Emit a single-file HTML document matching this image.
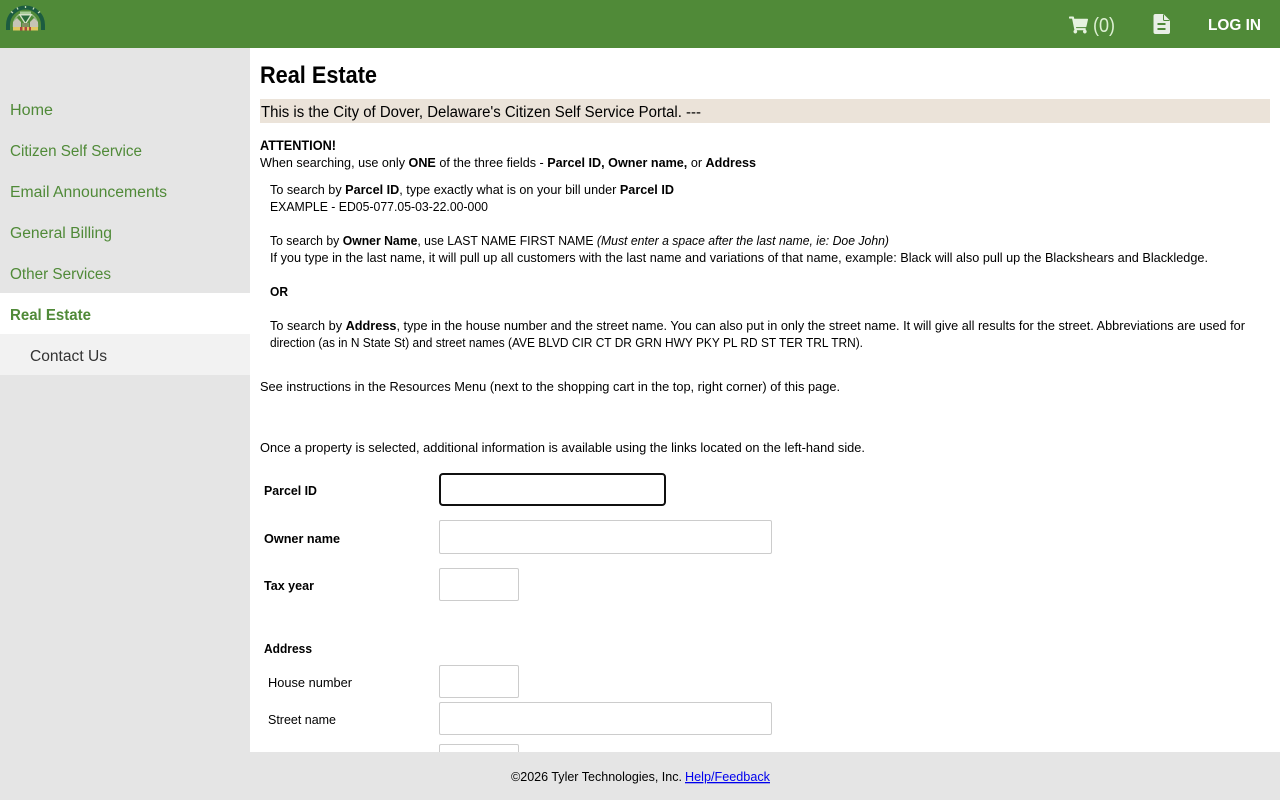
<!DOCTYPE html>
<html lang="en">
<head>
<meta charset="utf-8">
<title>Real Estate</title>
<style>
html,body{margin:0;padding:0;width:1280px;height:800px;overflow:hidden;background:#fff}
body{position:relative;font-family:"Liberation Sans",sans-serif}
.box{position:absolute}
input{position:absolute;box-sizing:border-box;left:439px;margin:0;padding:0;background:#fff;border:1px solid #ccc;border-radius:2px;outline:none}
svg{position:absolute;left:0;top:0}
text{font-family:"Liberation Sans",sans-serif;font-size:13px;fill:#000}
.b{font-weight:700}
.nav text,.nav{font-size:15.5px;fill:#508a38}
</style>
</head>
<body>
<div class="box" style="left:0;top:48px;width:250px;height:704px;background:#e5e5e5"></div>
<div class="box" style="left:0;top:293px;width:250px;height:41px;background:#fff"></div>
<div class="box" style="left:0;top:334px;width:250px;height:41px;background:#f2f2f2"></div>
<div class="box" style="left:260px;top:99px;width:1010px;height:24px;background:#ebe3d9"></div>

<input type="text" style="top:473px;width:227px;height:33px;border:2px solid #101010;border-radius:4px">
<input type="text" style="top:520px;width:333px;height:34px">
<input type="text" style="top:568px;width:80px;height:33px">
<input type="text" style="top:665px;width:80px;height:33px">
<input type="text" style="top:702px;width:333px;height:33px">
<input type="text" style="top:744px;width:80px;height:33px">

<div class="box" style="left:0;top:752px;width:1280px;height:48px;background:#e5e5e5"></div>
<div class="box" style="left:0;top:0;width:1280px;height:48px;background:#508a38"></div>

<svg width="1280" height="800" viewBox="0 0 1280 800" xmlns="http://www.w3.org/2000/svg">
  <!-- logo -->
  <g>
    <path d="M8 30V25A17.500 17.500 0 0 1 43 25V30" fill="none" stroke="#1c5c40" stroke-width="4"/>
    <path d="M13.500 27V25A12 12 0 0 1 37.500 25V27" fill="none" stroke="#8fb67f" stroke-width="1.500"/>
    <path d="M11 11.500L13 13M17 7.500L18 9.500M25.500 6V8M34 7.500L33 9.500M40 11.500L38 13" stroke="#c8dcb8" stroke-width="1.300"/>
    <path d="M20 11.500h11v2.500H20z" fill="#a8cc98"/>
    <path d="M18.500 14h14L25.500 25z" fill="#d5e2c8"/>
    <path d="M21 15.500h9L25.500 22.500z" fill="#2a6b3c"/>
    <path d="M13 22l4-4 4 4v6h-8z" fill="#c6c4b6"/>
    <path d="M30 22l4-4 4 4v6h-8z" fill="#c6c4b6"/>
    <path d="M22 23h7v5h-7z" fill="#7f8f62"/>
    <path d="M13 27h25v3.500H13z" fill="#e0c860"/>
    <path d="M20 27h2.500v3.500H20zM24.500 27h2.500v3.500h-2.500zM29 27h2v3.500h-2z" fill="#b0453c"/>
  </g>

  <!-- header right -->
  <svg x="1069" y="16.500" width="19" height="17" viewBox="0 0 576 512"><path fill="#e6f2df" d="M528.12 301.319l47.273-208C578.806 78.301 567.391 67 551.99 67H159.208l-9.166-44.81C147.758 10.021 137.93 0 125.776 0H24C10.745 0 0 10.745 0 24v16c0 13.255 10.745 24 24 24h69.883l70.248 343.435C147.325 417.1 136 435.222 136 456c0 30.928 25.072 56 56 56s56-25.072 56-56c0-15.674-6.447-29.835-16.824-40h209.647C430.447 426.165 424 440.326 424 456c0 30.928 25.072 56 56 56s56-25.072 56-56c0-22.172-12.888-41.332-31.579-50.405l5.517-24.276c3.413-15.018-8.002-29.319-23.403-29.319H218.117l-6.545-32h293.145c11.206 0 20.92-7.754 23.403-18.681z"/></svg>
  <text x="1093" y="32" textLength="22" lengthAdjust="spacingAndGlyphs" style="font-size:20px;fill:#dcefd2">(0)</text>
  <path fill="#e9efe6" d="M1155.500 14H1163.500L1170 20.500V32A2 2 0 0 1 1168 34H1155.500A2 2 0 0 1 1153.500 32V16A2 2 0 0 1 1155.500 14Z"/>
  <path fill="none" stroke="#508a38" stroke-width="1" d="M1163.500 14.500V19.500A1 1 0 0 0 1164.500 20.500H1169.500"/>
  <path fill="#508a38" d="M1157.500 23H1165.500V25H1157.500ZM1157.500 28H1165.500V30H1157.500Z"/>
  <text x="1208" y="30" textLength="53" lengthAdjust="spacingAndGlyphs" class="b" style="font-size:16px;fill:#fff">LOG IN</text>

  <!-- nav -->
  <g class="nav">
    <text x="10" y="115" textLength="43" lengthAdjust="spacingAndGlyphs">Home</text>
    <text x="10" y="156" textLength="132" lengthAdjust="spacingAndGlyphs">Citizen Self Service</text>
    <text x="10" y="197" textLength="157" lengthAdjust="spacingAndGlyphs">Email Announcements</text>
    <text x="10" y="238" textLength="102" lengthAdjust="spacingAndGlyphs">General Billing</text>
    <text x="10" y="279" textLength="101" lengthAdjust="spacingAndGlyphs">Other Services</text>
    <text x="10" y="320" textLength="81" lengthAdjust="spacingAndGlyphs" class="b">Real Estate</text>
    <text x="30" y="361" textLength="77" lengthAdjust="spacingAndGlyphs" style="fill:#333">Contact Us</text>
  </g>

  <!-- main -->
  <text x="260" y="83" textLength="117" lengthAdjust="spacingAndGlyphs" class="b" style="font-size:24px">Real Estate</text>
  <text x="261" y="117" textLength="440" lengthAdjust="spacingAndGlyphs" style="font-size:15.500px">This is the City of Dover, Delaware's Citizen Self Service Portal. ---</text>
  <text x="260" y="150" textLength="76" lengthAdjust="spacingAndGlyphs" class="b" style="font-size:14px">ATTENTION!</text>
  <text x="260" y="167" textLength="496" lengthAdjust="spacingAndGlyphs">When searching, use only <tspan class="b">ONE</tspan> of the three fields - <tspan class="b">Parcel ID, Owner name,</tspan> or <tspan class="b">Address</tspan></text>
  <text x="270" y="194" textLength="404" lengthAdjust="spacingAndGlyphs">To search by <tspan class="b">Parcel ID</tspan>, type exactly what is on your bill under <tspan class="b">Parcel ID</tspan></text>
  <text x="270" y="211" textLength="218" lengthAdjust="spacingAndGlyphs">EXAMPLE - ED05-077.05-03-22.00-000</text>
  <text x="270" y="245" textLength="619" lengthAdjust="spacingAndGlyphs">To search by <tspan class="b">Owner Name</tspan>, use LAST NAME FIRST NAME <tspan font-style="italic">(Must enter a space after the last name, ie: Doe John)</tspan></text>
  <text x="270" y="262" textLength="938" lengthAdjust="spacingAndGlyphs">If you type in the last name, it will pull up all customers with the last name and variations of that name, example: Black will also pull up the Blackshears and Blackledge.</text>
  <text x="270" y="296" textLength="18" lengthAdjust="spacingAndGlyphs" class="b">OR</text>
  <text x="270" y="330" textLength="975" lengthAdjust="spacingAndGlyphs">To search by <tspan class="b">Address</tspan>, type in the house number and the street name. You can also put in only the street name. It will give all results for the street. Abbreviations are used for</text>
  <text x="270" y="347" textLength="593" lengthAdjust="spacingAndGlyphs">direction (as in N State St) and street names (AVE BLVD CIR CT DR GRN HWY PKY PL RD ST TER TRL TRN).</text>
  <text x="260" y="391" textLength="580" lengthAdjust="spacingAndGlyphs">See instructions in the Resources Menu (next to the shopping cart in the top, right corner) of this page.</text>
  <text x="260" y="452" textLength="605" lengthAdjust="spacingAndGlyphs">Once a property is selected, additional information is available using the links located on the left-hand side.</text>

  <text x="264" y="495" textLength="53" lengthAdjust="spacingAndGlyphs" class="b">Parcel ID</text>
  <text x="264" y="543" textLength="76" lengthAdjust="spacingAndGlyphs" class="b">Owner name</text>
  <text x="264" y="590" textLength="50" lengthAdjust="spacingAndGlyphs" class="b">Tax year</text>
  <text x="264" y="653" textLength="48" lengthAdjust="spacingAndGlyphs" class="b">Address</text>
  <text x="268" y="687" textLength="84" lengthAdjust="spacingAndGlyphs">House number</text>
  <text x="268" y="724" textLength="68" lengthAdjust="spacingAndGlyphs">Street name</text>

  <!-- footer -->
  <text x="511" y="781" textLength="171" lengthAdjust="spacingAndGlyphs">©2026 Tyler Technologies, Inc.</text>
  <a href="#"><text x="685" y="781" textLength="85" lengthAdjust="spacingAndGlyphs" text-decoration="underline" style="fill:#0000ee">Help/Feedback</text></a>
</svg>
</body>
</html>
